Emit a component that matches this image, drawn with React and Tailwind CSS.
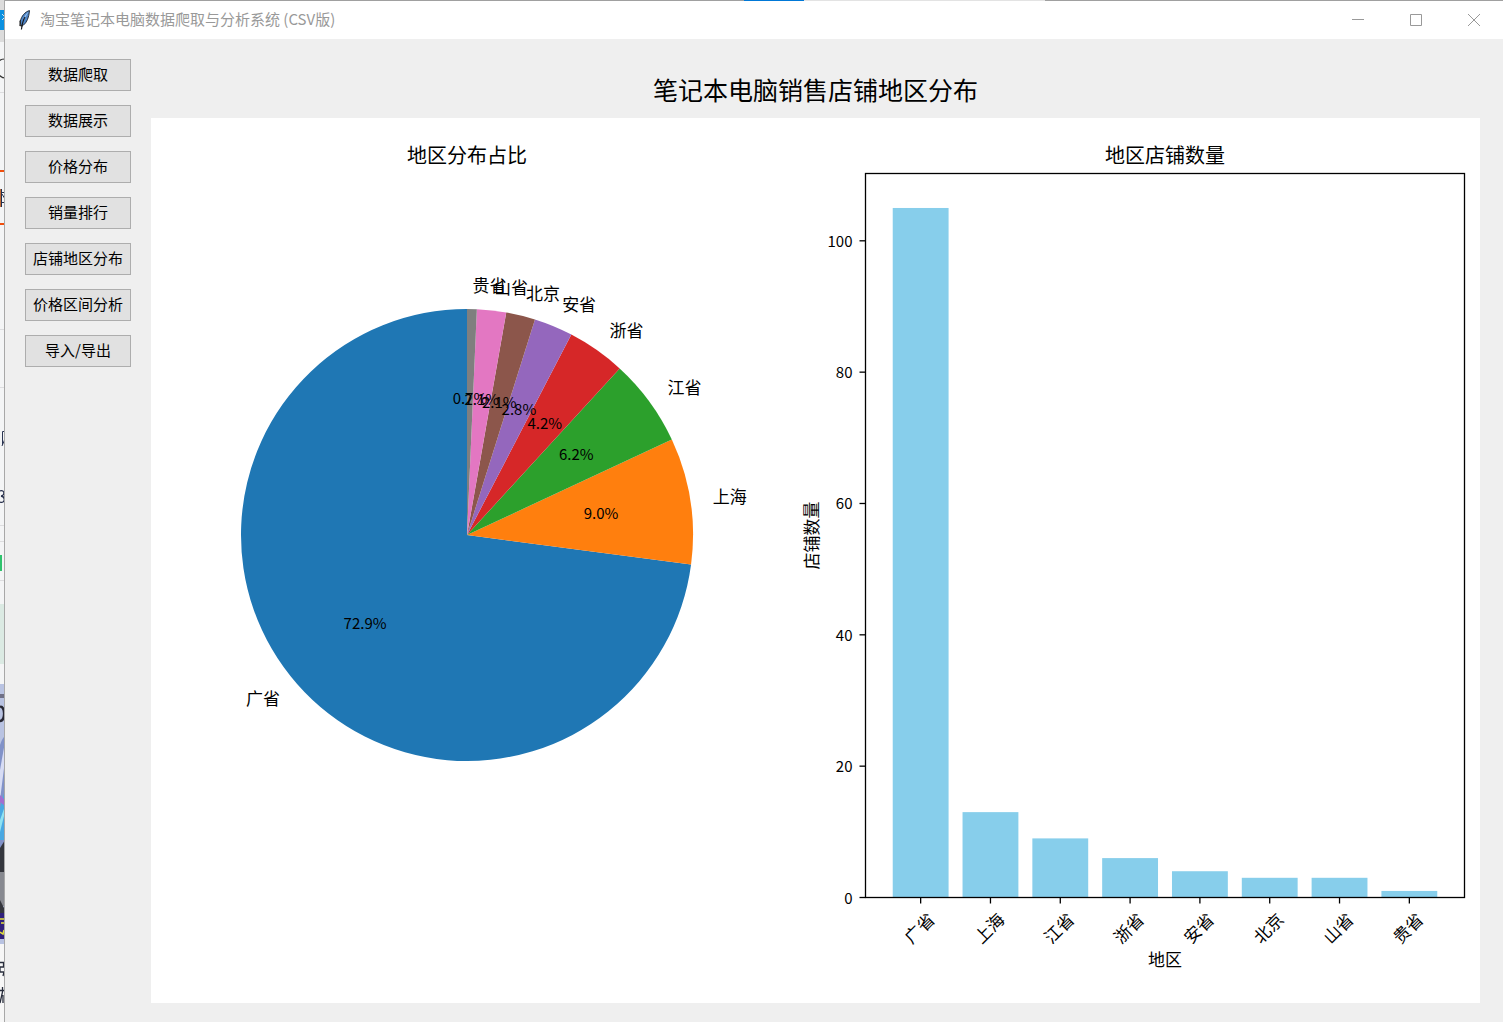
import React from "react";

const MENU = ["数据爬取", "数据展示", "价格分布", "销量排行", "店铺地区分布", "价格区间分析", "导入/导出"];

const REGIONS = [
  { name: "广省", count: 105, share: "72.9%", color: "#1f77b4" },
  { name: "上海", count: 13, share: "9.0%", color: "#ff7f0e" },
  { name: "江省", count: 9, share: "6.2%", color: "#2ca02c" },
  { name: "浙省", count: 6, share: "4.2%", color: "#d62728" },
  { name: "安省", count: 4, share: "2.8%", color: "#9467bd" },
  { name: "北京", count: 3, share: "2.1%", color: "#8c564b" },
  { name: "山省", count: 3, share: "2.1%", color: "#e377c2" },
  { name: "贵省", count: 1, share: "0.7%", color: "#7f7f7f" },
];

const TOTAL = REGIONS.reduce((sum, r) => sum + r.count, 0);

function PieChart({ cx, cy, r }) {
  let start = Math.PI / 2;
  const slices = REGIONS.map((region) => {
    const sweep = (region.count / TOTAL) * Math.PI * 2;
    const end = start + sweep;
    const mid = start + sweep / 2;
    const at = (angle, k) => [cx + Math.cos(angle) * r * k, cy - Math.sin(angle) * r * k];
    const [x1, y1] = at(start, 1);
    const [x2, y2] = at(end, 1);
    start = end;
    return {
      ...region,
      path: `M${cx} ${cy}L${x1} ${y1}A${r} ${r} 0 ${sweep > Math.PI ? 1 : 0} 0 ${x2} ${y2}Z`,
      label: at(mid, 1.1),
      percent: at(mid, 0.6),
      anchor: Math.cos(mid) > 0 ? "start" : "end",
    };
  });
  return (
    <g>
      <text x={cx} y="45" textAnchor="middle" className="text-[20px]">地区分布占比</text>
      {slices.map((s) => (
        <path key={s.name} d={s.path} fill={s.color} />
      ))}
      {slices.map((s) => (
        <g key={s.name}>
          <text x={s.label[0]} y={s.label[1] + 6} textAnchor={s.anchor} className="text-[17px]">{s.name}</text>
          <text x={s.percent[0]} y={s.percent[1] + 5} textAnchor="middle" className="text-[15px]">{s.share}</text>
        </g>
      ))}
    </g>
  );
}

function BarChart({ left, top, width, height }) {
  const bottom = top + height;
  const unit = width / 8.58;
  const scale = height / 110.25;
  const center = (i) => left + (i + 0.79) * unit;
  return (
    <g>
      <text x={left + width / 2} y="45" textAnchor="middle" className="text-[20px]">地区店铺数量</text>
      {REGIONS.map((r, i) => (
        <rect
          key={r.name}
          x={center(i) - unit * 0.4}
          y={bottom - r.count * scale}
          width={unit * 0.8}
          height={r.count * scale}
          fill="#87ceeb"
        />
      ))}
      <rect x={left} y={top} width={width} height={height} fill="none" stroke="#000" strokeWidth="1.3" />
      {[0, 20, 40, 60, 80, 100].map((v) => (
        <g key={v}>
          <path d={`M${left - 6} ${bottom - v * scale}H${left}`} stroke="#000" strokeWidth="1.3" />
          <text x={left - 13} y={bottom - v * scale + 6} textAnchor="end" className="text-[15px]">{v}</text>
        </g>
      ))}
      {REGIONS.map((r, i) => (
        <g key={r.name}>
          <path d={`M${center(i)} ${bottom}v6`} stroke="#000" strokeWidth="1.3" />
          <text transform={`translate(${center(i) - 1} ${bottom + 31}) rotate(-45)`} y="6" textAnchor="middle" className="text-[17px]">
            {r.name}
          </text>
        </g>
      ))}
      <text x={left + width / 2} y={bottom + 68} textAnchor="middle" className="text-[17px]">地区</text>
      <text transform={`translate(${left - 54} ${top + height / 2}) rotate(-90)`} y="6" textAnchor="middle" className="text-[17px]">
        店铺数量
      </text>
    </g>
  );
}

function Feather() {
  return (
    <svg viewBox="0 0 14 20" className="h-5 w-3.5 shrink-0" aria-hidden="true">
      <path d="M11.5 .6C7 1.800 3.500 6 2.200 11.500L3.200 16L5 15.500C9 12.500 10.800 7.500 11.500 .6Z" fill="#4f86c8" stroke="#26303c" strokeWidth="1" />
      <path d="M10.500 1.800C7.500 4 5.500 7.500 4.600 12L7.500 7Z" fill="#9cc4ee" />
      <path d="M7 7C5 10 4.200 14 3.400 19.500" fill="none" stroke="#151a20" strokeWidth="1.200" />
      <path d="M2.200 10.500L2 15.500L4.500 16" fill="none" stroke="#222" strokeWidth="1.200" />
    </svg>
  );
}

/* The sliver of the browser window that stays visible behind the application. */
function BackgroundSliver() {
  return (
    <svg viewBox="0 0 5 1022" width="5" height="1022" className="block shrink-0" aria-hidden="true">
      <rect width="5" height="1022" fill="#f4f5f6" />
      <rect width="5" height="42" fill="#dcdcdc" />
      <rect y="10" width="5" height="20" fill="#0a90e0" />
      <path d="M2 14l3 3l-3 3" fill="none" stroke="#c8e8fb" />
      <path d="M5 59C2 59 0 60 -1 61M-1 75C1 77 3 78 5 78" fill="none" stroke="#333" strokeWidth="1.200" />
      <path d="M0 92.500H5M0 329.500H5M0 387.500H5M0 525.500H5M0 541.500H5M0 580.500H5" stroke="#dddddf" />
      <path d="M0 171H5M0 224H5" stroke="#f04e0c" strokeWidth="2" />
      <path d="M0 192.500H5M1.500 189V207M2 194L5 199M0 202.500H4" stroke="#22304e" fill="none" />
      <path d="M.5 189V207" stroke="#c46a35" />
      <path d="M2.500 445V431.500H5M4.500 434V440L2 446" fill="none" stroke="#2b3552" />
      <path d="M0 491C5 489 5 496 1 496C6 497 5 504 0 502" fill="none" stroke="#27304c" strokeWidth="1.300" />
      <path d="M1 555V571" stroke="#2fc36d" strokeWidth="2" />
      <path d="M4.500 556V570" stroke="#a2b05c" strokeDasharray="2 1" />
      <rect y="604" width="5" height="60" fill="#dbeae3" />
      <rect y="684" width="5" height="260" fill="#b9c3e2" />
      <rect y="694" width="5" height="4" fill="#6f7086" />
      <path d="M0 707C5 705 6 721 0 721" fill="none" stroke="#272733" strokeWidth="2.500" />
      <path d="M0 745C3 737 4 737 5 736V850H0Z" fill="#8192c8" />
      <path d="M0 770L5 742V760L0 800Z" fill="#d7dcf4" />
      <path d="M0 808L5 790V840H0Z" fill="#49a8e2" />
      <path d="M0 820L5 806V812L0 832Z" fill="#8fe2f2" />
      <path d="M0 795L5 800V806L0 802Z" fill="#a26ed0" />
      <path d="M0 848L5 840V872H0Z" fill="#34363d" />
      <rect y="872" width="5" height="34" fill="#878990" />
      <path d="M0 900L5 910V914H0Z" fill="#34363d" />
      <rect y="913" width="5" height="26" fill="#30207c" />
      <path d="M0 919H4M1 923H4M0 932L3 934L4 930" fill="none" stroke="#e4df3d" strokeWidth="1.500" />
      <rect y="944" width="5" height="78" fill="#f7f7f7" />
      <path d="M0 962.500H3.500V967H0V972H4L3 976M0 990.500H5M2.500 987V992L0 1003M3 995V1003" fill="none" stroke="#272c3b" strokeWidth="1.300" />
      <path d="M4.500 0V1022" stroke="#a8a8a8" />
    </svg>
  );
}

export default function App() {
  return (
    <div className="flex h-screen overflow-hidden bg-[#efefef] text-black [font-family:'Noto_Sans_CJK_SC',sans-serif]">
      <BackgroundSliver />
      <div className="flex min-w-0 flex-1 flex-col">
        <div className="flex h-px shrink-0" aria-hidden="true">
          <div className="w-1/2 grow bg-[#a0a0a0]" />
          <div className="w-[60px] shrink-0 bg-[#0078d7]" />
          <div className="w-[241px] shrink-0 bg-[#e3e3e3]" />
          <div className="w-[458px] shrink-0 bg-[#a0a0a0]" />
        </div>
        <header className="flex h-[38px] shrink-0 items-center bg-white pl-[13px] text-[#999999]">
          <Feather />
          <h1 className="ml-2 grow pb-0.5 text-[15px] leading-5">淘宝笔记本电脑数据爬取与分析系统 (CSV版)</h1>
          <button type="button" aria-label="最小化" className="flex h-full w-[58px] items-center justify-center">
            <svg viewBox="0 0 12 12" className="size-3" stroke="currentColor" fill="none"><path d="M0 5.500H12" /></svg>
          </button>
          <button type="button" aria-label="最大化" className="flex h-full w-[58px] items-center justify-center">
            <svg viewBox="0 0 12 12" className="size-3" stroke="currentColor" fill="none"><path d="M.5 .5H11.500V11.500H.5Z" /></svg>
          </button>
          <button type="button" aria-label="关闭" className="flex h-full w-[58px] items-center justify-center">
            <svg viewBox="0 0 12 12" className="size-3" stroke="currentColor" fill="none"><path d="M0 0L12 12M12 0L0 12" /></svg>
          </button>
        </header>
        <div className="flex min-h-0 flex-1 items-start gap-5 pt-5 pr-[23px] pl-5">
          <nav className="flex shrink-0 flex-col gap-3.5">
            {MENU.map((item) => (
              <button key={item} type="button" className="h-8 w-[106px] border border-[#adadad] bg-[#e1e1e1] pb-0.5 text-[15px] leading-5">
                {item}
              </button>
            ))}
          </nav>
          <main className="min-w-0 flex-1 pt-3">
            <h2 className="pb-[11px] text-center text-[25px] leading-9">笔记本电脑销售店铺地区分布</h2>
            <div className="bg-white">
              <svg viewBox="0 0 1329 885" className="block h-auto w-full" role="img" aria-label="笔记本电脑销售店铺地区分布">
                <PieChart cx={316} cy={417} r={226} />
                <BarChart left={714.5} top={55.5} width={599} height={724} />
              </svg>
            </div>
          </main>
        </div>
      </div>
    </div>
  );
}
